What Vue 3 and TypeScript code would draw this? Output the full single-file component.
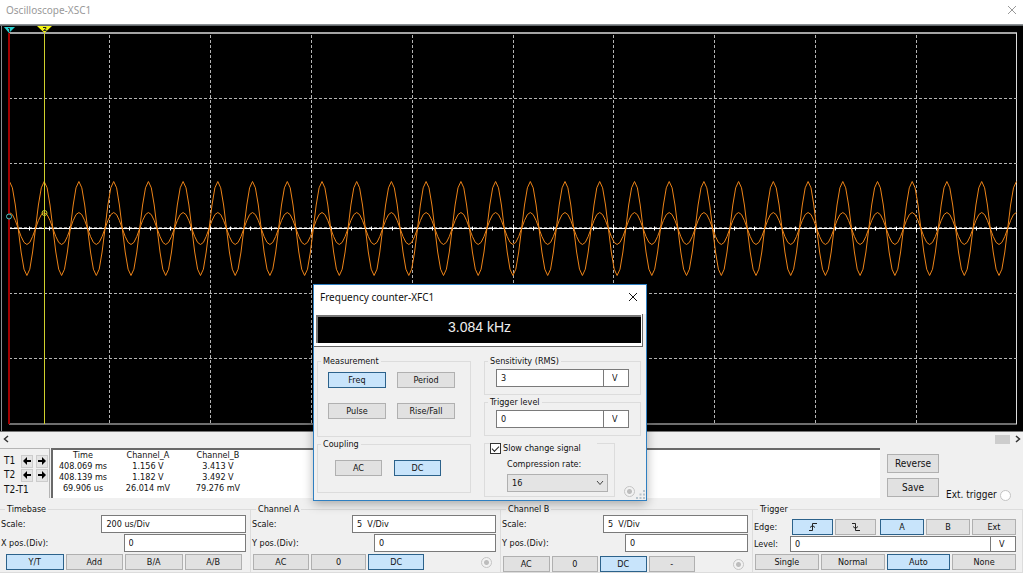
<script setup lang="ts">
import { ref } from 'vue'

interface Channel {
  name: string
  key: string
  offset: string
  modes: string[]
}

const LEFT = 9
const RIGHT = 1017
const TOP = 33
const BOTTOM = 424
const AXIS = 228.5
const DIV_X = (RIGHT - LEFT) / 10
const DIV_Y = (BOTTOM - TOP) / 6
const PERIOD = 34.72

function wave(amplitude: number): string {
  const points: string[] = []
  const step = PERIOD / 12
  for (let i = 0; LEFT + 0.5 + i * step <= RIGHT; i++) {
    const x = LEFT + 0.5 + i * step
    const y = AXIS - amplitude * Math.cos((i / 12) * Math.PI * 2)
    points.push(`${x.toFixed(1)},${y.toFixed(1)}`)
  }
  return points.join(' ')
}

const waveA = wave(16)
const waveB = wave(47)
const columns = Array.from({ length: 9 }, (_, i) => Math.floor(LEFT + (i + 1) * DIV_X) + 0.5)
const rows = [1, 2, 4, 5].map((i) => Math.floor(TOP + i * DIV_Y) + 0.5)
const ticks = Array.from({ length: 49 }, (_, i) => ({
  x: Math.floor(LEFT + ((i + 1) * DIV_X) / 5) + 0.5,
  half: (i + 1) % 5 === 0 ? 4 : 2,
}))

const readings = [
  ['408.069 ms', '1.156 V', '3.413 V'],
  ['408.139 ms', '1.182 V', '3.492 V'],
  ['69.906 us', '26.014 mV', '79.276 mV'],
]
const channels: Channel[] = [
  { name: 'Channel A', key: 'a', offset: '0', modes: ['AC', '0', 'DC'] },
  { name: 'Channel B', key: 'b', offset: '0', modes: ['AC', '0', 'DC', '-'] },
]

const display = ref('Y/T')
const coupling = ref<Record<string, string>>({ a: 'DC', b: 'DC' })
const edge = ref('rising')
const source = ref('A')
const sweep = ref('Auto')
const measurement = ref('Freq')
const counterCoupling = ref('DC')
const slow = ref(true)
const rate = ref('16')
</script>

<template>
  <main class="window">
    <header class="titlebar">
      <h1>Oscilloscope-XSC1</h1>
      <button class="close" aria-label="Close oscilloscope">
        <svg viewBox="0 0 10 10"><path d="M1 1L9 9M9 1L1 9" /></svg>
      </button>
    </header>

    <svg class="scope" viewBox="0 24 1023 407" preserveAspectRatio="none" role="img" aria-label="Waveforms">
      <rect x="0" y="24" width="1023" height="407" fill="#000" />
      <path d="M0 24.5H1023M1.5 24V431" stroke="#8a8f92" stroke-width="1" />
      <path d="M0 25.5H1023" stroke="#62676a" />
      <path d="M9 33H1017" stroke="#a4a4a4" stroke-width="2" />
      <path d="M1016.5 33V424M9 424H1017" stroke="#dcdcdc" fill="none" />
      <g stroke="#b4b4b4" stroke-dasharray="3 2">
        <line v-for="x in columns" :key="'c' + x" :x1="x" :x2="x" y1="35" y2="424" />
        <line v-for="y in rows" :key="'r' + y" x1="9" x2="1017" :y1="y" :y2="y" />
      </g>
      <path d="M9 228.5H1017" stroke="#fff" />
      <path d="M9 227.5H1017" stroke="#8c8c8c" stroke-dasharray="3 2" />
      <line v-for="t in ticks" :key="t.x" :x1="t.x" :x2="t.x" :y1="AXIS - t.half" :y2="AXIS + t.half" stroke="#fff" />
      <polyline :points="waveB" class="trace" />
      <polyline :points="waveA" class="trace" />
      <path d="M9 33V424" stroke="#a30000" stroke-width="2" />
      <path d="M44.5 33V424" stroke="#d0d02c" />
      <path d="M4 27H15L9 33Z" fill="#27cfd0" />
      <path d="M37 26H52L44.5 33Z" fill="#f5f513" />
      <path d="M8 28.500H9.500V32M43 27.500H46V28.500L43.500 30.500H46.500" stroke="#222" fill="none" />
      <circle cx="9" cy="216.500" r="2.5" fill="#000" stroke="#4fc4c4" />
      <circle cx="44.5" cy="213" r="2.5" fill="none" stroke="#d0d02c" />
    </svg>

    <nav class="scroll" aria-label="Scroll waveform">
      <button aria-label="Scroll left"><svg viewBox="0 0 6 8"><path d="M5 1L1.500 4L5 7" /></svg></button>
      <span class="thumb"></span>
      <button aria-label="Scroll right"><svg viewBox="0 0 6 8"><path d="M1 1L4.500 4L1 7" /></svg></button>
    </nav>

    <section class="readout">
      <div class="cursors">
        <template v-for="c in ['T1', 'T2']" :key="c">
          <span>{{ c }}</span>
          <button :aria-label="c + ' left'"><svg viewBox="0 0 10 10"><path d="M1 5L5 1V4H9V6H5V9Z" /></svg></button>
          <button :aria-label="c + ' right'"><svg viewBox="0 0 10 10"><path d="M9 5L5 1V4H1V6H5V9Z" /></svg></button>
        </template>
        <span class="diff">T2-T1</span>
      </div>
      <div class="values">
        <table>
          <thead>
            <tr><th>Time</th><th>Channel_A</th><th>Channel_B</th></tr>
          </thead>
          <tbody>
            <tr v-for="r in readings" :key="r[0]"><td v-for="v in r" :key="v">{{ v }}</td></tr>
          </tbody>
        </table>
      </div>
      <div class="actions">
        <button class="btn">Reverse</button>
        <button class="btn">Save</button>
      </div>
      <label class="ext">Ext. trigger <input type="radio" class="port" name="ext" /></label>
    </section>

    <section class="panels">
      <fieldset>
        <legend>Timebase</legend>
        <div class="row"><label for="ts">Scale:</label><input id="ts" class="scale" value="200 us/Div" /></div>
        <div class="row"><label for="tx">X pos.(Div):</label><input id="tx" class="pos" value="0" /></div>
        <div class="buttons">
          <button v-for="m in ['Y/T', 'Add', 'B/A', 'A/B']" :key="m" class="btn" :class="{ on: display === m }" @click="display = m">{{ m }}</button>
        </div>
      </fieldset>
      <fieldset v-for="c in channels" :key="c.key" :class="'channel-' + c.key">
        <legend>{{ c.name }}</legend>
        <div class="row"><label :for="'s' + c.key">Scale:</label><input :id="'s' + c.key" class="scale" value="5  V/Div" /></div>
        <div class="row"><label :for="'p' + c.key">Y pos.(Div):</label><input :id="'p' + c.key" class="pos" :value="c.offset" /></div>
        <div class="buttons">
          <button v-for="m in c.modes" :key="m" class="btn" :class="{ on: coupling[c.key] === m }" @click="coupling[c.key] = m">{{ m }}</button>
          <input type="radio" class="port dot" :name="'port' + c.key" :aria-label="c.name + ' input'" />
        </div>
      </fieldset>
      <fieldset class="trigger">
        <legend>Trigger</legend>
        <div class="row edge">
          <span>Edge:</span>
          <button class="btn slope" :class="{ on: edge === 'rising' }" aria-label="Rising edge" @click="edge = 'rising'">
            <svg viewBox="0 0 10 10"><path d="M1 8.500H4.500V1.500H9M2 5.500L4.500 3.500L7 5.500" /></svg>
          </button>
          <button class="btn slope" :class="{ on: edge === 'falling' }" aria-label="Falling edge" @click="edge = 'falling'">
            <svg viewBox="0 0 10 10"><path d="M1 1.500H4.500V8.500H9M2 4.500L4.500 6.500L7 4.500" /></svg>
          </button>
          <i></i>
          <button v-for="s in ['A', 'B', 'Ext']" :key="s" class="btn" :class="{ on: source === s }" @click="source = s">{{ s }}</button>
        </div>
        <div class="row level"><label for="lv">Level:</label><input id="lv" value="0" /><input class="unit" value="V" aria-label="Level unit" /></div>
        <div class="buttons">
          <button v-for="m in ['Single', 'Normal', 'Auto', 'None']" :key="m" class="btn" :class="{ on: sweep === m }" @click="sweep = m">{{ m }}</button>
        </div>
      </fieldset>
    </section>

    <section class="dialog" role="dialog" aria-labelledby="fc">
      <header>
        <h2 id="fc">Frequency counter-XFC1</h2>
        <button class="close" aria-label="Close frequency counter">
          <svg viewBox="0 0 10 10"><path d="M1 1L9 9M9 1L1 9" /></svg>
        </button>
      </header>
      <div class="bezel"><output>3.084 kHz</output></div>
      <div class="body">
        <div class="side">
          <fieldset class="measure">
            <legend>Measurement</legend>
            <button v-for="m in ['Freq', 'Period', 'Pulse', 'Rise/Fall']" :key="m" class="btn" :class="{ on: measurement === m }" @click="measurement = m">{{ m }}</button>
          </fieldset>
          <fieldset class="couple">
            <legend>Coupling</legend>
            <button v-for="m in ['AC', 'DC']" :key="m" class="btn" :class="{ on: counterCoupling === m }" @click="counterCoupling = m">{{ m }}</button>
          </fieldset>
        </div>
        <div class="side">
          <fieldset class="value">
            <legend>Sensitivity (RMS)</legend>
            <input value="3" aria-label="Sensitivity (RMS)" /><input class="unit" value="V" aria-label="Sensitivity unit" />
          </fieldset>
          <fieldset class="value">
            <legend>Trigger level</legend>
            <input value="0" aria-label="Trigger level" /><input class="unit" value="V" aria-label="Trigger level unit" />
          </fieldset>
          <div class="bottom">
            <div class="slow" role="group">
              <label class="check"><input v-model="slow" type="checkbox" />Slow change signal</label>
              <label for="rate">Compression rate:</label>
              <div class="select">
                <select id="rate" v-model="rate"><option>4</option><option>16</option><option>64</option></select>
                <svg viewBox="0 0 8 6"><path d="M1 1L4 4.500L7 1" /></svg>
              </div>
            </div>
            <input type="radio" class="port dot" name="counter" aria-label="Counter input" />
          </div>
        </div>
      </div>
      <svg class="grip" viewBox="0 0 9 9"><path d="M7 0h2v2h-2zM7 3.500h2v2h-2zM3.500 3.500h2v2h-2zM7 7h2v2h-2zM3.500 7h2v2h-2zM0 7h2v2h-2z" /></svg>
    </section>
  </main>
</template>

<style>
body {
  margin: 0;
  background: #f0f0f0;
}
</style>

<style scoped>
* {
  box-sizing: border-box;
}
.window {
  position: relative;
  display: flex;
  flex-direction: column;
  min-height: 100vh;
  overflow: hidden;
  background: #f0f0f0;
  color: #111;
  font: 9px/12px "DejaVu Sans Condensed", "DejaVu Sans", sans-serif;
}
button,
input,
select {
  margin: 0;
  font: inherit;
  color: inherit;
  border-radius: 0;
}
svg {
  display: block;
}
.titlebar,
.dialog header {
  display: flex;
  align-items: center;
  justify-content: space-between;
  background: #fff;
  padding: 0 6px;
}
.titlebar {
  height: 24px;
  padding-bottom: 4px;
  color: #999;
}
h1,
h2 {
  margin: 0;
  font: 10px/16px "Noto Sans", sans-serif;
}
.close {
  border: 0;
  padding: 0;
  background: none;
}
.close svg {
  width: 10px;
  height: 10px;
  fill: none;
  stroke: currentColor;
}
.scope {
  flex: 1 1 0;
  width: 100%;
  min-height: 300px;
}
.trace {
  fill: none;
  stroke: #ee8418;
  stroke-width: 1;
}
.scroll {
  display: flex;
  align-items: center;
  justify-content: flex-end;
  height: 17px;
  padding: 0 2px 2px 3px;
  border-top: 1px solid #777;
}
.scroll button {
  padding: 0;
  border: 0;
  background: none;
}
.scroll button:first-child {
  margin-right: auto;
}
.scroll svg {
  width: 6px;
  height: 8px;
  fill: none;
  stroke: #333;
  stroke-width: 1.5;
}
.thumb {
  width: 15px;
  height: 9px;
  margin-right: 5px;
  background: #cdcdcd;
}
.readout {
  display: flex;
  height: 50px;
  margin-bottom: 6px;
}
.cursors {
  display: grid;
  grid-template-columns: 14px 12px 12px;
  grid-template-rows: 14px 14px 16px;
  column-gap: 3px;
  align-items: center;
  width: 50px;
  padding: 5px 0 0 4px;
  border: 1px solid #b4b4b4;
  border-width: 1px 1px 0 0;
  font-size: 10px;
}
.cursors button {
  height: 13px;
  padding: 0;
  border: 1px solid #ccc;
  background: #e4e4e4;
}
.cursors svg {
  width: 10px;
  height: 10px;
  fill: #000;
}
.diff {
  grid-column: 1 / 4;
}
.values {
  flex: 1;
  margin-left: 1px;
  border: 1px solid #696969;
  border-width: 2px 0 0 2px;
  background: #fff;
}
table {
  border-collapse: collapse;
  table-layout: fixed;
  width: 200px;
  line-height: 11px;
}
th,
td {
  width: 70px;
  padding: 0;
  font-weight: normal;
  text-align: center;
  white-space: nowrap;
}
th:first-child {
  width: 60px;
}
.actions {
  display: grid;
  gap: 5px;
  align-content: start;
  width: 52px;
  margin: 6px 7px 0;
  font-size: 10px;
}
.actions .btn {
  height: 19px;
}
.ext {
  display: flex;
  align-items: center;
  align-self: flex-end;
  justify-content: space-between;
  width: 77px;
  height: 12px;
  padding-right: 12px;
  margin-bottom: -3px;
  font-size: 10px;
  white-space: nowrap;
}
.port {
  flex: none;
  width: 11px;
  height: 11px;
  appearance: none;
  border: 1px solid #c4c4c4;
  border-radius: 50%;
  background: #fff;
}
.dot {
  background: radial-gradient(circle, #bdbdbd 2px, #f2f2f2 3px);
}
.btn {
  min-width: 0;
  height: 16px;
  padding: 0;
  border: 1px solid #b0b0b0;
  background: #e1e1e1;
  line-height: 12px;
  text-align: center;
  white-space: nowrap;
}
.btn.on {
  border-color: #2c628b;
  background: #c8e4fb;
}
input:not([type]),
select {
  min-width: 0;
  height: 18px;
  padding: 0 4px;
  border: 1px solid #7a7a7a;
  background: #fff;
  outline: 0;
}
fieldset {
  min-width: 0;
  margin: 0;
  padding: 0;
  border: 1px solid #dcdcdc;
}
legend {
  padding: 0 2px;
  line-height: 12px;
}
.panels {
  display: grid;
  grid-template-columns: 251fr 250fr 252fr 270fr;
}
.panels fieldset {
  padding: 0 4px 0 1px;
  border-width: 1px 1px 1px 0;
}
.panels legend {
  margin-left: 4px;
  line-height: 11px;
}
.row {
  display: flex;
  align-items: center;
  justify-content: space-between;
  height: 18px;
  margin-bottom: 1px;
}
.row .scale {
  width: 59%;
}
.row .pos {
  width: 50%;
}
.buttons {
  display: flex;
  gap: 2px;
  align-items: center;
  padding: 1px 4px 0 5px;
}
.buttons .btn {
  flex: 1;
}
.channel-a .buttons,
.channel-b .buttons {
  padding-left: 1px;
}
.channel-b .buttons {
  padding-top: 3px;
}
.buttons .port {
  margin-left: 55px;
}
.channel-b .port {
  margin-left: 36px;
}
.panels .trigger {
  padding-right: 6px;
}
.trigger .buttons {
  padding: 1px 0 0 1px;
}
.edge {
  gap: 2px;
  height: 20px;
  padding-top: 3px;
}
.edge span,
.level label {
  flex: none;
  width: 36px;
}
.edge .btn {
  flex: 1;
}
.edge .slope {
  flex: 0 0 41px;
}
.edge svg {
  width: 10px;
  height: 10px;
  margin: 0 auto;
  fill: none;
  stroke: #222;
}
.level {
  height: 16px;
}
.level input {
  flex: 1;
  height: 16px;
}
.row .unit,
.value .unit {
  flex: 0 0 26px;
  margin-left: -1px;
  padding: 0 0 0 8px;
}
.dialog {
  position: absolute;
  top: 284px;
  left: 313px;
  width: 334px;
  border: 1px solid #2f7fc1;
  background: #f0f0f0;
  box-shadow: 0 3px 10px rgba(0, 0, 0, 0.3);
}
.dialog header {
  height: 29px;
  padding: 0 8px 6px 6px;
}
.bezel {
  margin-right: 3px;
  padding: 1px 1px 3px 2px;
  border: 1px solid #666;
  border-width: 0 1px 1px 0;
  background: #fff;
}
.bezel output {
  display: block;
  height: 28px;
  border: 1px solid #777;
  border-width: 2px 0 0 2px;
  background: #000;
  color: #eee;
  font: 14px/20px "Liberation Sans", sans-serif;
  text-align: center;
}
.body {
  display: grid;
  grid-template-columns: 154px 157px;
  column-gap: 13px;
  padding: 8px 5px 3px 3px;
}
.side {
  display: flex;
  flex-direction: column;
  gap: 1px;
}
.measure {
  display: grid;
  grid-template-columns: 58px 58px;
  gap: 15px 11px;
  height: 82px;
  align-content: start;
  padding: 5px 0 0 10px;
}
.measure legend {
  margin-left: -7px;
}
.couple {
  display: grid;
  grid-template-columns: 47px 47px;
  column-gap: 12px;
  height: 55px;
  align-content: start;
  padding: 10px 0 0 17px;
}
.couple legend {
  margin-left: -14px;
}
.value {
  display: flex;
  height: 40px;
  padding: 2px 11px 0;
}
.value legend {
  margin-left: -8px;
}
.value > input {
  flex: 1;
}
.bottom {
  display: flex;
  align-items: flex-end;
  justify-content: space-between;
  margin-top: 6px;
  padding-right: 6px;
}
.slow {
  display: flex;
  flex-direction: column;
  width: 131px;
  height: 54px;
  padding: 0 6px 0 22px;
  border: 1px solid #dcdcdc;
}
.check {
  display: flex;
  align-items: center;
  align-self: flex-start;
  gap: 2px;
  margin: -2px 0 4px -17px;
  padding-right: 16px;
  background: #f0f0f0;
  white-space: nowrap;
}
.check input {
  display: grid;
  width: 11px;
  height: 11px;
  appearance: none;
  border: 1px solid #333;
  background: #fff;
}
.check input:checked::after {
  content: "";
  width: 6px;
  height: 3px;
  margin: 2px auto 0;
  border: 1px solid #222;
  border-width: 0 0 1px 1px;
  transform: rotate(-45deg);
}
.select {
  display: grid;
  margin-top: 4px;
}
.select > * {
  grid-area: 1 / 1;
}
.select select {
  appearance: none;
  border-color: #b0b0b0;
  background: #e4e4e4;
}
.select svg {
  align-self: center;
  justify-self: end;
  width: 8px;
  height: 6px;
  margin-right: 4px;
  fill: none;
  stroke: #444;
  pointer-events: none;
}
.grip {
  position: absolute;
  right: 1px;
  bottom: 1px;
  width: 9px;
  height: 9px;
  fill: #b8c4cc;
}
</style>
